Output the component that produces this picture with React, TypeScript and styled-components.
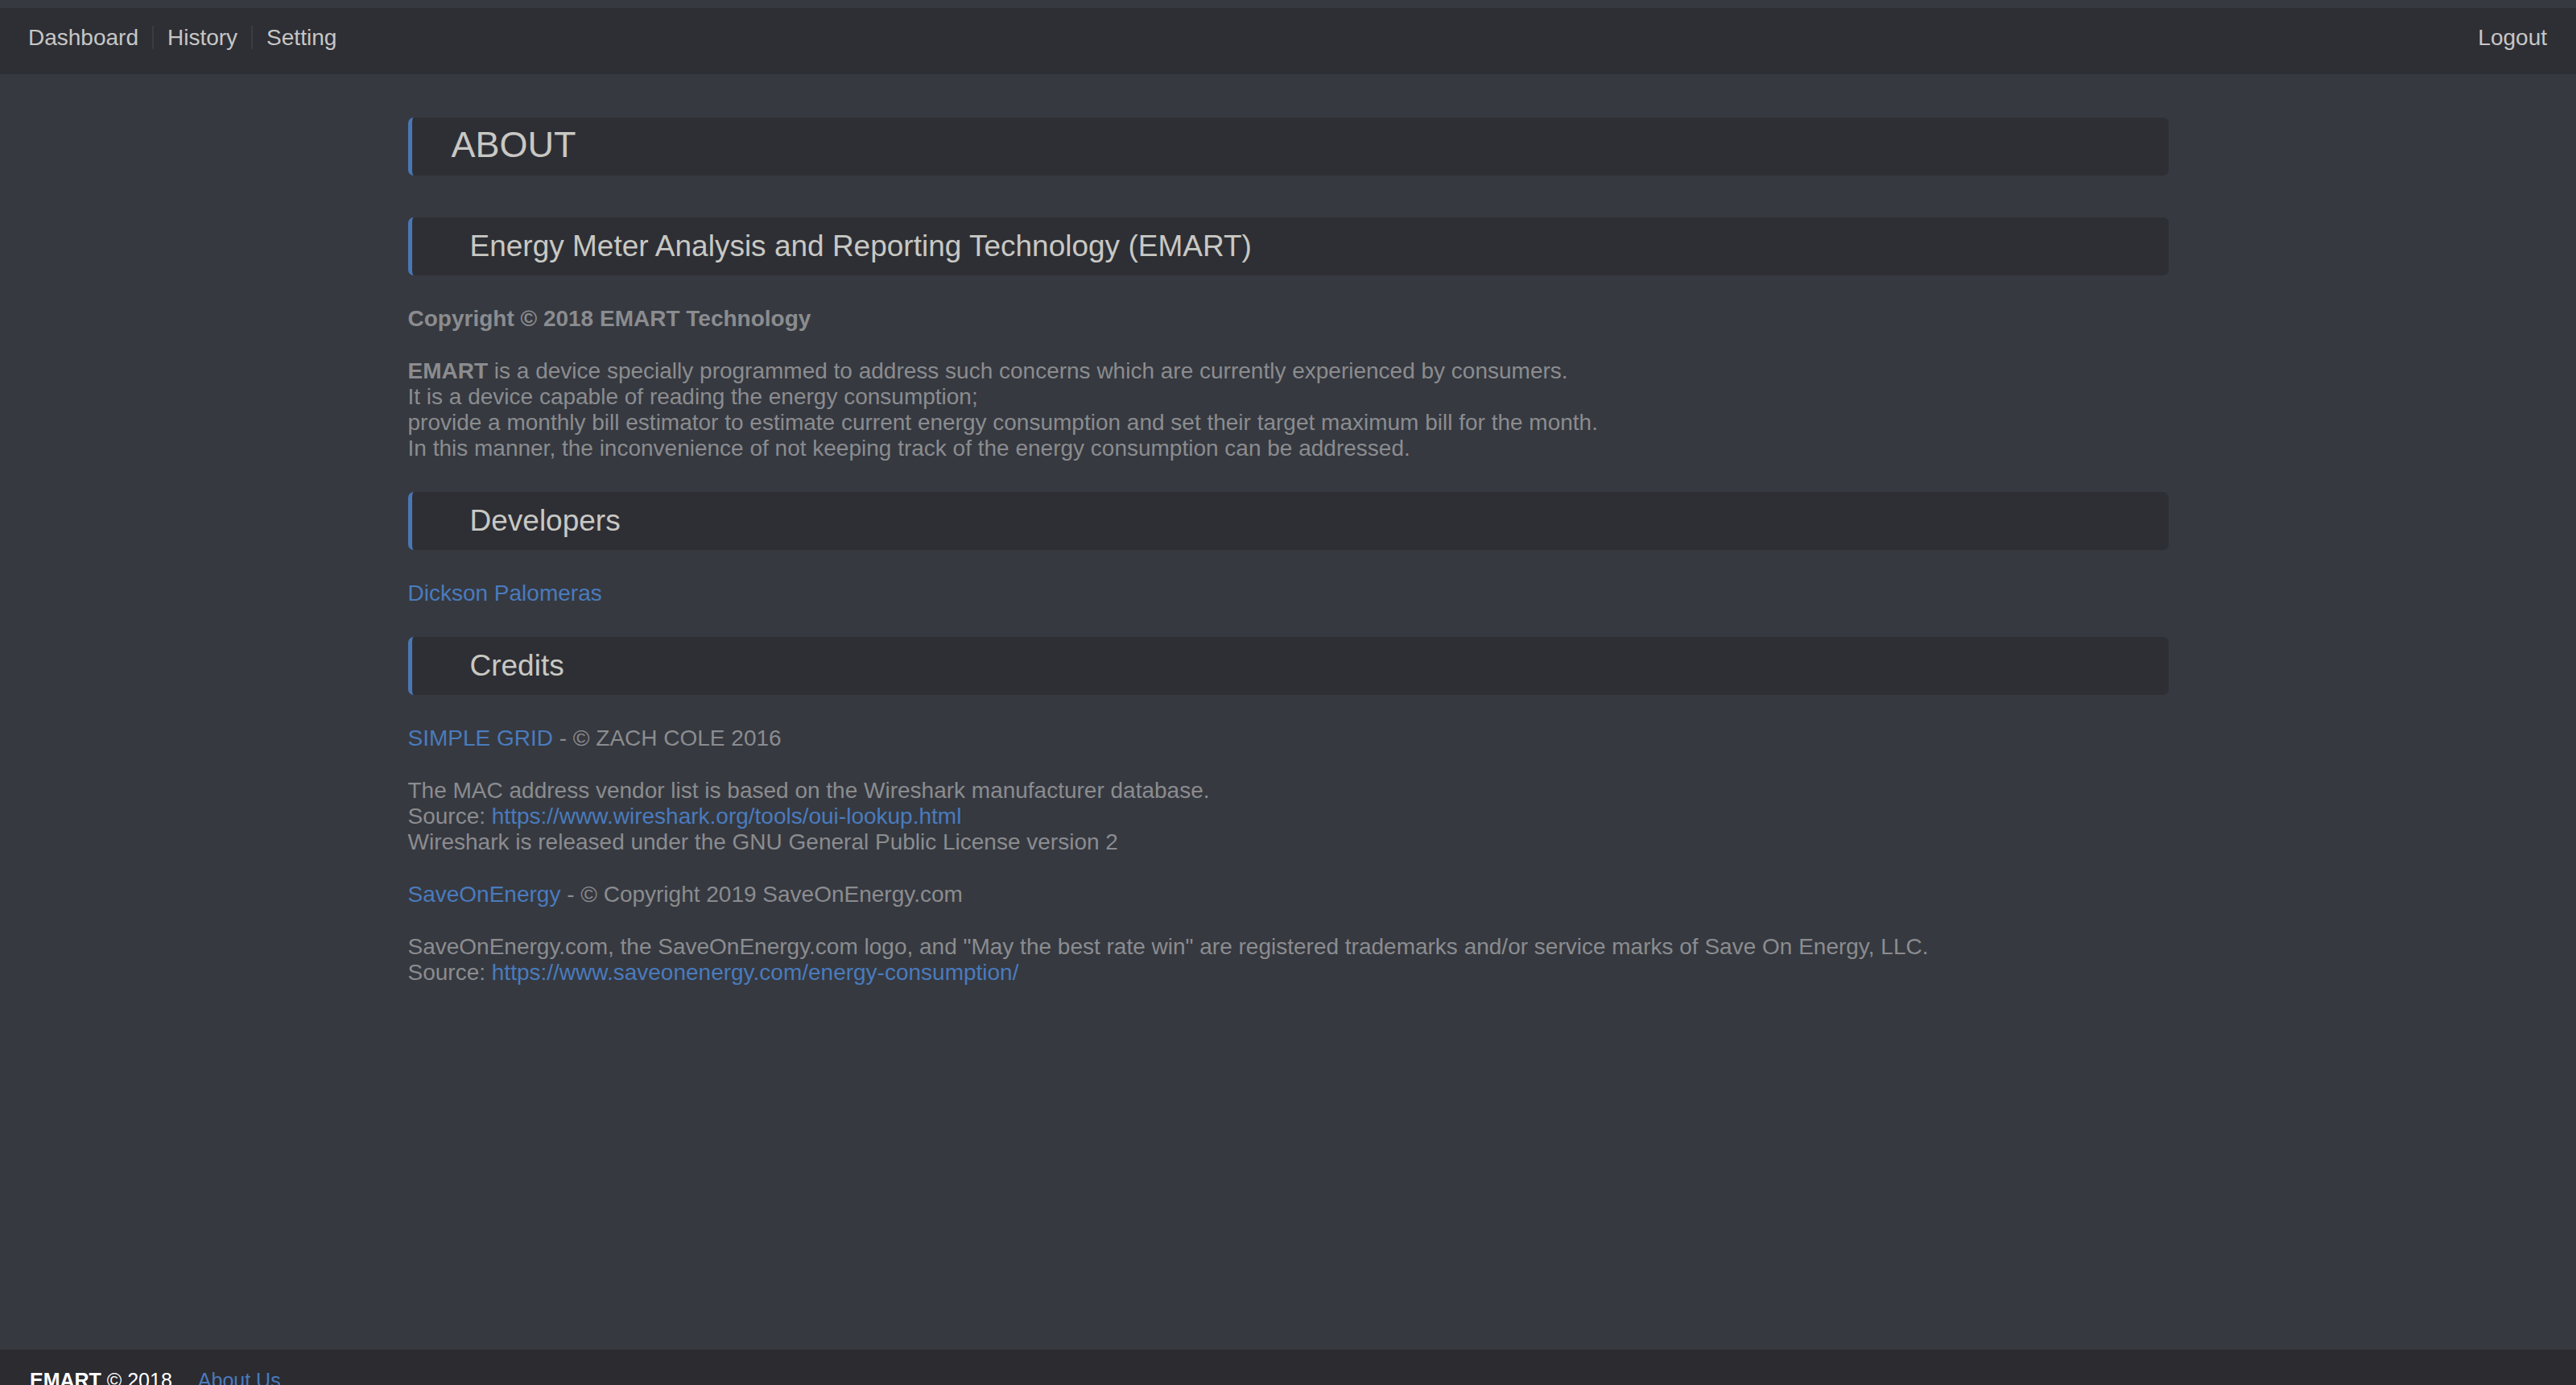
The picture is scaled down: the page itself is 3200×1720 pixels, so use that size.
import styled, { createGlobalStyle } from 'styled-components';

const GlobalStyle = createGlobalStyle`
  html, body {
    margin: 0;
    padding: 0;
  }

  body {
    padding-top: 10px;
    background-color: #363940;
    font-family: "Liberation Sans", Arial, Helvetica, sans-serif;
  }

  *, *::before, *::after {
    box-sizing: border-box;
  }
`;

const NavBar = styled.nav`
  display: flex;
  justify-content: space-between;
  align-items: center;
  height: 82px;
  padding: 0 17px 10px 18px;
  background-color: #2e2f34;
`;

const NavGroup = styled.div`
  display: flex;
  align-items: center;
`;

const NavItem = styled.a<{ $divider?: boolean }>`
  padding: 0 17px;
  font-size: 28px;
  line-height: 29px;
  color: #c6c6c6;
  text-decoration: none;
  cursor: pointer;
  border-right: 2px solid ${(p) => (p.$divider ? '#3a3c42' : 'transparent')};

  &:hover {
    color: #ffffff;
  }
`;

const Main = styled.main`
  min-height: 1584px;
  padding-top: 54px;
`;

const Content = styled.div`
  width: 2187px;
  margin: 0 auto;
  display: flex;
  flex-direction: column;
  gap: 38px;
`;

const Banner = styled.h2<{ $large?: boolean }>`
  display: flex;
  align-items: center;
  height: 72px;
  margin: ${(p) => (p.$large ? '0 0 14px' : '0')};
  padding: ${(p) => (p.$large ? '0 0 4px 49px' : '0 0 0 72px')};
  background-color: #2e2f34;
  border-left: 5px solid #4a77b4;
  border-radius: 7px;
  color: #c8c8c4;
  font-size: ${(p) => (p.$large ? '45px' : '37px')};
  font-weight: 400;
`;

const TextBlock = styled.div`
  color: #8b8c8f;
  font-size: 28px;
  line-height: 32px;

  p {
    margin: 0 0 33px;
  }

  p:last-child {
    margin-bottom: 0;
  }

  b {
    font-weight: 700;
  }
`;

const TextLink = styled.a`
  color: #4a7bbd;
  text-decoration: none;
  cursor: pointer;

  &:hover {
    text-decoration: underline;
  }
`;

const Footer = styled.footer`
  display: flex;
  align-items: baseline;
  gap: 32px;
  padding: 22px 37px;
  background-color: #2b2b30;
  color: #ffffff;
  font-size: 25px;
  line-height: 32px;

  b {
    font-weight: 700;
  }
`;

export default function App() {
  return (
    <>
      <GlobalStyle />
      <NavBar>
        <NavGroup>
          <NavItem $divider>Dashboard</NavItem>
          <NavItem $divider>History</NavItem>
          <NavItem>Setting</NavItem>
        </NavGroup>
        <NavGroup>
          <NavItem>Logout</NavItem>
        </NavGroup>
      </NavBar>

      <Main>
        <Content>
          <Banner $large>ABOUT</Banner>
          <Banner>Energy Meter Analysis and Reporting Technology (EMART)</Banner>
          <TextBlock>
            <p>
              <b>Copyright © 2018 EMART Technology</b>
            </p>
            <p>
              <b>EMART</b> is a device specially programmed to address such concerns which are currently
              experienced by consumers.
              <br />
              It is a device capable of reading the energy consumption;
              <br />
              provide a monthly bill estimator to estimate current energy consumption and set their target
              maximum bill for the month.
              <br />
              In this manner, the inconvenience of not keeping track of the energy consumption can be addressed.
            </p>
          </TextBlock>

          <Banner>Developers</Banner>
          <TextBlock>
            <TextLink>Dickson Palomeras</TextLink>
          </TextBlock>

          <Banner>Credits</Banner>
          <TextBlock>
            <p>
              <TextLink>SIMPLE GRID</TextLink> - © ZACH COLE 2016
            </p>
            <p>
              The MAC address vendor list is based on the Wireshark manufacturer database.
              <br />
              Source: <TextLink>https://www.wireshark.org/tools/oui-lookup.html</TextLink>
              <br />
              Wireshark is released under the GNU General Public License version 2
            </p>
            <p>
              <TextLink>SaveOnEnergy</TextLink> - © Copyright 2019 SaveOnEnergy.com
            </p>
            <p>
              SaveOnEnergy.com, the SaveOnEnergy.com logo, and "May the best rate win" are registered trademarks
              and/or service marks of Save On Energy, LLC.
              <br />
              Source: <TextLink>https://www.saveonenergy.com/energy-consumption/</TextLink>
            </p>
          </TextBlock>
        </Content>
      </Main>

      <Footer>
        <span>
          <b>EMART</b> © 2018
        </span>
        <TextLink>About Us</TextLink>
      </Footer>
    </>
  );
}
